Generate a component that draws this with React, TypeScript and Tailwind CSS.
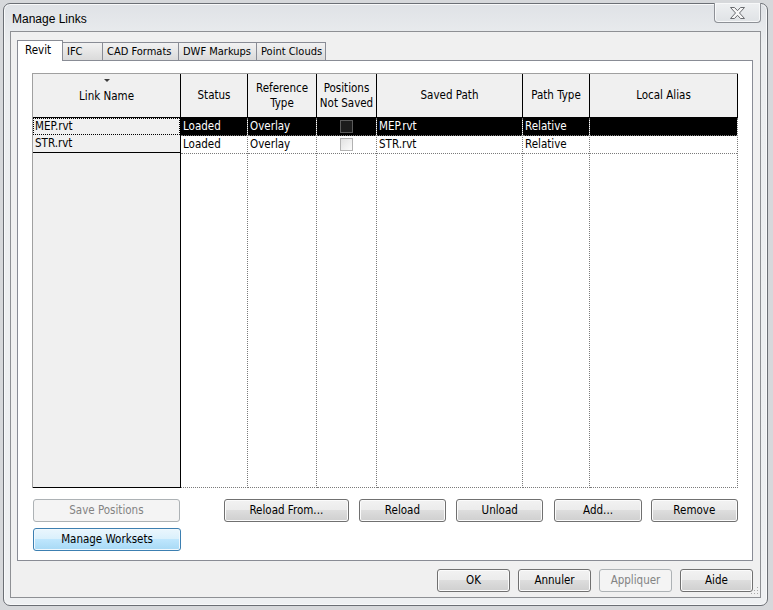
import React from "react";

const FONT = "font-['DejaVu_Sans_Condensed','Liberation_Sans',sans-serif]";

type Col = {
  key: string;
  w: string;
  head: React.ReactNode;
  cells: React.ReactNode[];
};

const Check = ({ dark }: { dark?: boolean }) => (
  <span
    className={
      dark
        ? "block h-[13px] w-[13px] border border-[#5a5a5a] bg-[#1c1c1c]"
        : "block h-[13px] w-[13px] border border-[#b2b2b2] bg-[linear-gradient(135deg,#e2e2e2,#fbfbfb)]"
    }
  />
);

const COLS: Col[] = [
  { key: "status", w: "w-[67px]", head: "Status", cells: ["Loaded", "Loaded"] },
  {
    key: "ref",
    w: "w-[69px]",
    head: (
      <>
        Reference
        <br />
        Type
      </>
    ),
    cells: ["Overlay", "Overlay"],
  },
  {
    key: "pos",
    w: "w-[60px]",
    head: (
      <>
        Positions
        <br />
        Not Saved
      </>
    ),
    cells: [<Check dark key="a" />, <Check key="b" />],
  },
  { key: "saved", w: "w-[146px]", head: "Saved Path", cells: ["MEP.rvt", "STR.rvt"] },
  { key: "ptype", w: "w-[67px]", head: "Path Type", cells: ["Relative", "Relative"] },
  { key: "alias", w: "w-[148px]", head: "Local Alias", cells: ["", ""] },
];

function Btn({
  children,
  className,
  kind = "normal",
}: {
  children: React.ReactNode;
  className: string;
  kind?: "normal" | "disabled" | "hot";
}) {
  const look =
    kind === "disabled"
      ? "border-[#adb2b5] bg-[#f4f4f4] text-[#838383]"
      : kind === "hot"
      ? "border-[#3c7fb1] bg-[linear-gradient(#eaf6fd,#d9f0fc_50%,#bee6fd_50%,#a7d9f5)] text-black shadow-[inset_0_0_0_1px_#f0f8fd]"
      : "border-[#707070] bg-[linear-gradient(#f2f2f2,#ebebeb_50%,#dddddd_50%,#cfcfcf)] text-black shadow-[inset_0_0_0_1px_#fbfbfb]";
  return (
    <button
      className={`flex h-[23px] items-center justify-center whitespace-nowrap rounded-[3px] border text-[11.5px] ${look} ${className}`}
    >
      {children}
    </button>
  );
}

function Tab({ label, w, active }: { label: string; w: string; active?: boolean }) {
  return active ? (
    <div
      className={`relative z-10 -mb-px flex h-[21px] items-center whitespace-nowrap border border-b-0 border-[#898c95] bg-white pl-[7px] text-[11.5px] ${w}`}
    >
      {label}
    </div>
  ) : (
    <div
      className={`flex h-[18px] items-center overflow-hidden whitespace-nowrap border border-b-0 border-l-0 border-[#898c95] bg-[linear-gradient(#f2f2f2,#e6e6e6_50%,#dadada)] pl-[4px] pt-px text-[11px] ${w}`}
    >
      {label}
    </div>
  );
}

function LinksGrid() {
  return (
    <div className="flex h-[415px] whitespace-nowrap border-l border-t border-[#a0a0a0] text-[11.5px] text-black">
      {/* Link Name column */}
      <div className="flex w-[148px] flex-col">
        <div className="relative flex h-[44px] items-center justify-center border-b border-r border-black bg-[#f0f0f0] pt-[2px]">
          <svg
            className="absolute left-[71px] top-[5px]"
            width="6"
            height="4"
            viewBox="0 0 6 4"
          >
            <path d="M0 0h6L3 3z" fill="#3c3c3c" />
          </svg>
          Link Name
        </div>
        <div className="flex flex-1 flex-col border-b border-r border-black bg-[#f0f0f0]">
          <div className="flex h-[17px] items-center border border-dotted border-black pl-[1px]">
            MEP.rvt
          </div>
          <div className="flex h-[18px] items-center border-b border-black pl-[2px]">
            STR.rvt
          </div>
        </div>
      </div>

      {COLS.map((c) => (
        <div key={c.key} className={`flex flex-col ${c.w}`}>
          <div className="flex h-[44px] items-center justify-center border-b border-r border-black bg-[#f0f0f0] text-center leading-[15px]">
            <span>{c.head}</span>
          </div>
          <div className="flex flex-1 flex-col border-b border-r border-dotted border-[#7a7a7a] bg-white">
            {c.cells.map((v, i) => (
              <div
                key={i}
                className={`flex h-[18px] items-center border-b border-dotted border-[#7a7a7a] ${
                  c.key === "pos" ? "justify-center" : "pl-[2px]"
                } ${i === 0 ? "bg-black text-white" : "bg-white text-black"}`}
              >
                {v}
              </div>
            ))}
          </div>
        </div>
      ))}
    </div>
  );
}

export default function App() {
  return (
    <div className={`h-[610px] w-[773px] overflow-hidden bg-[#d6d8db] pl-[3px] pt-[3px] ${FONT}`}>
      <div className="flex h-[603px] w-[765px] flex-col rounded-[7px] border border-[#6b6f75] bg-[linear-gradient(#dfe2e6,#eceef0_40px,#eef0f2)] px-[6px] pb-[7px] shadow-[inset_0_0_0_1px_#f8f9fa]">
        {/* title bar */}
        <div className="flex h-[27px] shrink-0 items-start justify-between">
          <span className="mt-[6px] pl-[2px] font-['Liberation_Sans',sans-serif] text-[12px] text-black">
            Manage Links
          </span>
          <div className="-mt-px flex h-[20px] w-[47px] items-center justify-center rounded-b-[4px] border border-t-0 border-[#8d9096] bg-[linear-gradient(#eef0f2,#dfe2e5)] shadow-[inset_0_0_0_1px_#f7f8f9]">
            <svg width="15" height="12" viewBox="0 0 15 12">
              <path
                d="M0.5 0.5h4l3 3.2 3-3.2h4l-5 5.5 5 5.5h-4l-3-3.2-3 3.2h-4l5-5.5z"
                fill="#f7f7f7"
                stroke="#6a6c70"
                strokeWidth="1"
                strokeLinejoin="round"
              />
            </svg>
          </div>
        </div>

        {/* client area */}
        <div className="relative flex flex-1 flex-col border border-[#8e9094] bg-[#f0f0f0] pl-[6px] pr-[7px] pt-[8px] text-black">
          {/* tabs */}
          <div className="flex items-end">
            <Tab label="Revit" w="w-[46px]" active />
            <Tab label="IFC" w="w-[40px]" />
            <Tab label="CAD Formats" w="w-[76px]" />
            <Tab label="DWF Markups" w="w-[78px]" />
            <Tab label="Point Clouds" w="w-[69px]" />
          </div>

          {/* tab panel */}
          <div className="h-[501px] w-[736px] border border-[#898c95] bg-white px-[14px] pt-[12px]">
            <LinksGrid />

            <div className="mt-[11px] flex">
              <Btn kind="disabled" className="ml-px w-[148px]">
                Save Positions
              </Btn>
              <Btn className="ml-[44px] w-[126px]">Reload From...</Btn>
              <Btn className="ml-[10px] w-[88px]">Reload</Btn>
              <Btn className="ml-[10px] w-[88px]">Unload</Btn>
              <Btn className="ml-[11px] w-[88px]">Add...</Btn>
              <Btn className="ml-[9px] w-[88px]">Remove</Btn>
            </div>
            <div className="mt-[6px] flex">
              <Btn kind="hot" className="ml-px w-[148px]">
                Manage Worksets
              </Btn>
            </div>
          </div>

          {/* dialog buttons */}
          <div className="mt-[8px] flex justify-end gap-[8px]">
            <Btn className="w-[73px]">OK</Btn>
            <Btn className="w-[73px]">Annuler</Btn>
            <Btn kind="disabled" className="w-[73px]">
              Appliquer
            </Btn>
            <Btn className="w-[73px]">Aide</Btn>
          </div>

          {/* size grip */}
          <svg
            className="absolute bottom-[2px] right-[1px]"
            width="8"
            height="8"
            viewBox="0 0 8 8"
          >
            <g fill="#a8a8a8">
              <rect x="6" y="0" width="1" height="1" />
              <rect x="3" y="3" width="1" height="1" />
              <rect x="6" y="3" width="1" height="1" />
              <rect x="0" y="6" width="1" height="1" />
              <rect x="3" y="6" width="1" height="1" />
              <rect x="6" y="6" width="1" height="1" />
            </g>
          </svg>
        </div>
      </div>
    </div>
  );
}
